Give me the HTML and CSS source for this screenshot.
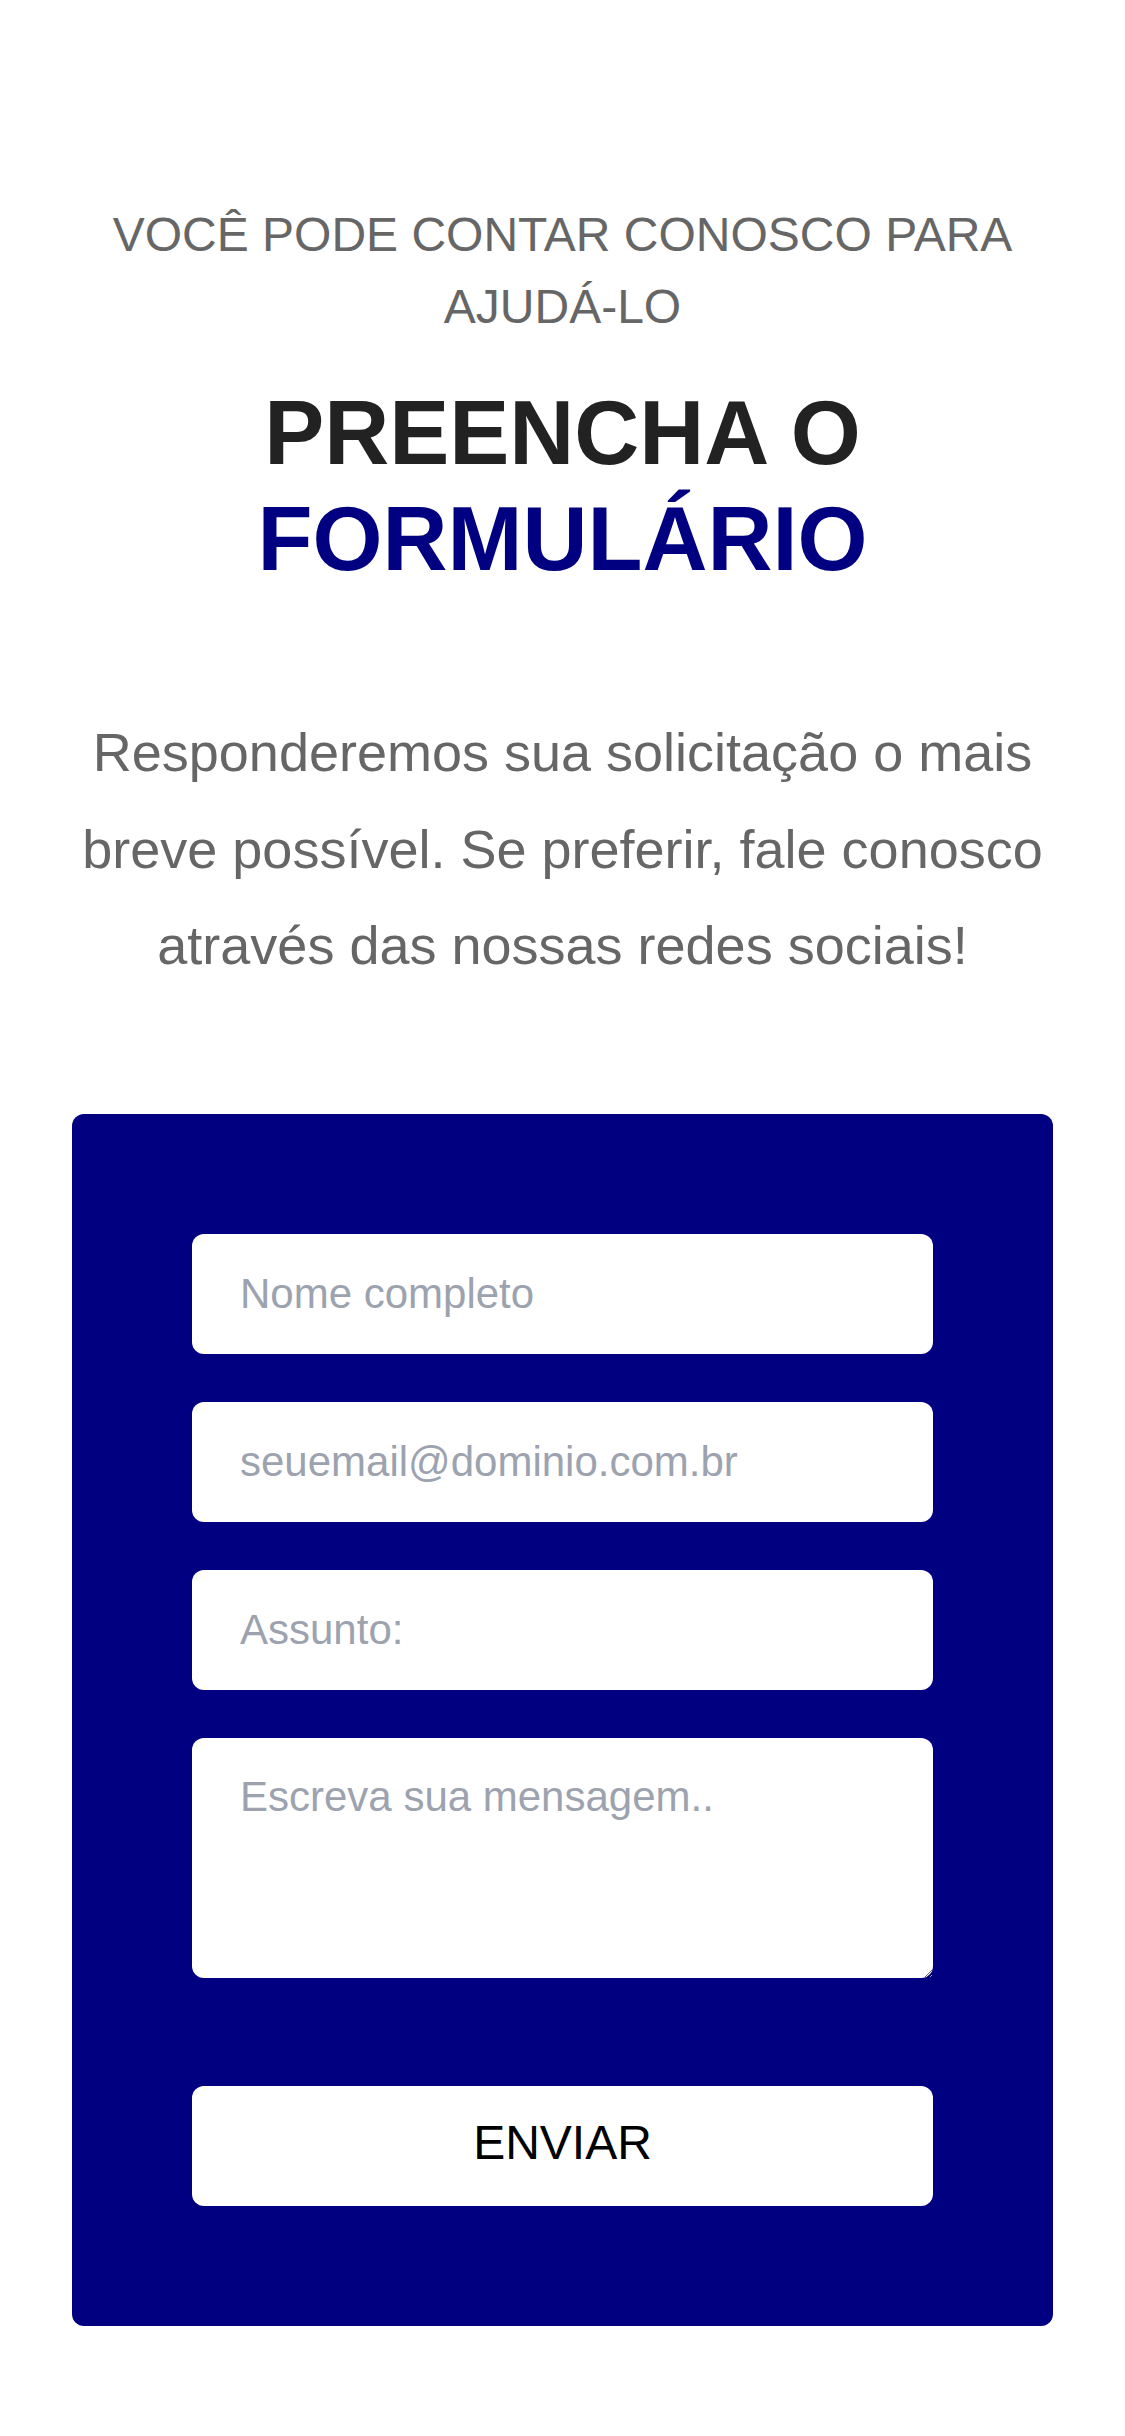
FILE: index.html
```html
<!DOCTYPE html>
<html lang="pt-BR">
<head>
<meta charset="utf-8">
<title>Preencha o formulário</title>
<link rel="stylesheet" href="styles.css">
</head>
<body>
<main class="page">
  <section class="intro">
    <p class="eyebrow">VOCÊ PODE CONTAR CONOSCO PARA AJUDÁ-LO</p>
    <h1 class="title">PREENCHA O <span class="accent">FORMULÁRIO</span></h1>
    <p class="lead">Responderemos sua solicitação o mais breve possível. Se preferir, fale conosco através das nossas redes sociais!</p>
  </section>
  <section class="card">
    <form class="form">
      <input class="field" type="text" placeholder="Nome completo">
      <input class="field" type="email" placeholder="seuemail@dominio.com.br">
      <input class="field" type="text" placeholder="Assunto:">
      <textarea class="field area" placeholder="Escreva sua mensagem.."></textarea>
      <button class="submit" type="button">ENVIAR</button>
    </form>
  </section>
</main>
</body>
</html>
```
FILE: styles.css
```css
* { box-sizing: border-box; }
html, body { margin: 0; padding: 0; background: #ffffff; }
body { font-family: "Liberation Sans", Arial, sans-serif; }

.page {
  padding: 199px 72px 0;
  display: flex;
  flex-direction: column;
}

.intro {
  text-align: center;
  display: flex;
  flex-direction: column;
}

.eyebrow {
  margin: 0;
  font-size: 48px;
  line-height: 72px;
  color: #666666;
  padding: 0 24px;
}

.title {
  margin: 37px 0 0;
  font-size: 90px;
  line-height: 106px;
  font-weight: 700;
  color: #222222;
}

.accent { color: #000080; }

.lead {
  margin: 112px 0 0;
  font-size: 54px;
  line-height: 96.5px;
  color: #666666;
}

.card {
  margin-top: 120px;
  background: #000080;
  border-radius: 12px;
  padding: 120px 120px 120px;
}

.form {
  display: flex;
  flex-direction: column;
  gap: 48px;
}

.field {
  display: block;
  width: 100%;
  height: 120px;
  border: 0;
  border-radius: 12px;
  background: #ffffff;
  padding: 0 48px;
  font-family: "Liberation Sans", Arial, sans-serif;
  font-size: 42px;
  color: #111111;
  outline: none;
}

.field::placeholder { color: #9ca3af; opacity: 1; }

.area {
  height: 240px;
  padding: 35px 48px;
  line-height: 48px;
  resize: both;
}

.submit {
  margin-top: 60px;
  height: 120px;
  border: 0;
  border-radius: 12px;
  background: #ffffff;
  color: #000000;
  font-family: "Liberation Sans", Arial, sans-serif;
  font-size: 48px;
  padding: 0 0 6px;
  cursor: pointer;
}
```
